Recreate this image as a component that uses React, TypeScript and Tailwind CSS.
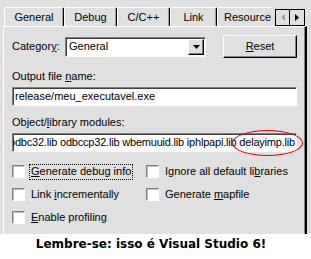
import React from 'react';

const ui = "font-['Liberation_Sans',Arial,sans-serif] text-[11px] leading-[13px] text-black";

function U({ children }: { children: React.ReactNode }) {
  return <span className="underline underline-offset-[1px] decoration-1">{children}</span>;
}

function Tab({ label, w, selected }: { label: string; w: string; selected?: boolean }) {
  if (selected) {
    return (
      <div className={`${w} h-[24px] -mx-[2px] -mb-[1px] relative z-10 bg-[#e0e0e0] border-l border-t border-white border-r border-r-black shadow-[inset_-1px_0_0_#a0a0a0] rounded-t-[2px] flex items-center justify-center pb-[3px]`}>
        {label}
      </div>
    );
  }
  return (
    <div className={`${w} h-[19px] border-l border-t border-white border-r border-r-black shadow-[inset_-1px_0_0_#a0a0a0] rounded-t-[2px] flex items-center justify-center`}>
      {label}
    </div>
  );
}

function Check({ children, focus }: { children: React.ReactNode; focus?: boolean }) {
  return (
    <div className="h-[17px] flex items-center gap-[4px]">
      <div className="w-[13px] h-[13px] bg-white border border-t-[#808080] border-l-[#808080] border-b-white border-r-white shadow-[inset_1px_1px_0_#c0c0c0]" />
      <div className={focus ? 'border border-dotted border-black px-[1px] h-[16px] flex items-center' : 'px-[2px]'}>{children}</div>
    </div>
  );
}

export default function App() {
  return (
    <div className={`w-[311px] h-[259px] bg-white flex flex-col overflow-hidden ${ui}`}>
      {/* dialog area */}
      <div className="h-[234px] bg-[#e0e0e0] flex flex-col pl-[3px] pr-[4px]">
        {/* tab strip */}
        <div className="h-[26px] flex items-end pl-[1px]">
          <Tab label="General" w="w-[60px]" />
          <Tab label="Debug" w="w-[53px]" />
          <Tab label="C/C++" w="w-[53px]" />
          <Tab label="Link" w="w-[47px]" />
          <div className="w-[54px] h-[19px] overflow-hidden border-l border-t border-white rounded-tl-[2px] flex items-center pl-[6px] whitespace-nowrap">
            Resource
          </div>
          <div className="ml-auto self-start mt-[9px] mr-[2px] flex border border-black h-[17px]">
            <div className="w-[14px] flex items-center justify-center border-r border-black bg-[#e0e0e0]">
              <svg width="4" height="7" viewBox="0 0 4 7"><path d="M4 0L0 3.5L4 7Z" fill="#a0a0a0" /></svg>
            </div>
            <div className="w-[14px] flex items-center justify-center bg-[#e0e0e0]">
              <svg width="4" height="7" viewBox="0 0 4 7"><path d="M0 0L4 3.5L0 7Z" fill="#000" /></svg>
            </div>
          </div>
        </div>

        {/* panel */}
        <div className="flex-1 border-l border-t border-white border-r-2 border-r-black shadow-[inset_-1px_0_0_#808080] flex flex-col pl-[8px] pt-[8px]">
          <div className="h-[23px] flex items-center">
            <div className="w-[53px]">
              Categor<U>y</U>:
            </div>
            <div className="w-[141px] h-[20px] bg-white border border-t-[#808080] border-l-[#808080] border-b-white border-r-white shadow-[inset_1px_1px_0_#404040] flex items-center">
              <span className="flex-1 pl-[3px]">General</span>
              <div className="w-[16px] h-[16px] mr-[1px] bg-[#e0e0e0] border border-t-white border-l-white border-b-black border-r-black shadow-[inset_-1px_-1px_0_#808080] flex items-center justify-center">
                <svg width="7" height="4" viewBox="0 0 7 4"><path d="M0 0H7L3.5 4Z" fill="#000" /></svg>
              </div>
            </div>
            <div className="ml-[17px] w-[74px] h-[23px] border border-t-white border-l-white border-b-black border-r-black shadow-[inset_-1px_-1px_0_#808080] flex items-center justify-center">
              <span>
                <U>R</U>eset
              </span>
            </div>
          </div>

          <div className="mt-[12px]">
            Output file <U>n</U>ame:
          </div>
          <div className="mt-[4px] w-[285px] h-[19px] bg-white border border-t-[#808080] border-l-[#808080] border-b-white border-r-white shadow-[inset_1px_1px_0_#404040] flex items-center pl-[2px]">
            release/meu_executavel.exe
          </div>

          <div className="mt-[10px]">
            Object/<U>l</U>ibrary modules:
          </div>
          <div className="mt-[4px] relative w-[285px]">
            <div className="h-[19px] bg-white border border-t-[#808080] border-l-[#808080] border-b-white border-r-white shadow-[inset_1px_1px_0_#404040] flex items-center justify-end overflow-hidden pr-[1px]">
              <span className="whitespace-nowrap tracking-[-0.2px]">odbc32.lib odbccp32.lib wbemuuid.lib iphlpapi.lib delayimp.lib</span>
            </div>
            <div className="absolute left-[220px] top-[-3px] w-[71px] h-[26px] rounded-[50%] border border-red-600" />
          </div>

          <div className="mt-[11px] grid grid-cols-[134px_1fr] gap-y-[6px]">
            <Check focus>
              <U>G</U>enerate debug info
            </Check>
            <Check>
              Ignore all default li<U>b</U>raries
            </Check>
            <Check>
              Link <U>i</U>ncrementally
            </Check>
            <Check>
              Generate <U>m</U>apfile
            </Check>
            <Check>
              <U>E</U>nable profiling
            </Check>
          </div>
        </div>
      </div>

      {/* caption */}
      <div className="flex-1 flex justify-center pt-[4px] pr-[9px]">
        <span className="font-['DejaVu_Sans',Verdana,sans-serif] font-bold text-[12px] leading-[13px]">
          Lembre-se: isso é Visual Studio 6!
        </span>
      </div>
    </div>
  );
}
